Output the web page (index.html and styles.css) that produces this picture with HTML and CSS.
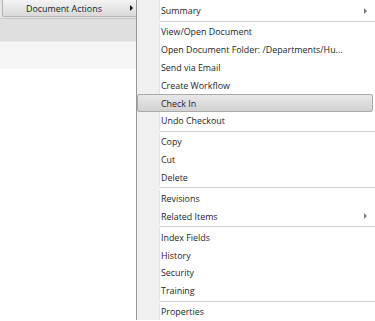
FILE: index.html
```html
<!DOCTYPE html>
<html lang="en">
<head>
  <meta charset="UTF-8">
  <title>Document Actions</title>
  <link rel="stylesheet" href="styles.css">
</head>
<body>
  <div class="page">
    <div class="toolbar">
      <div class="action-btn">
        <span>Document Actions</span>
        <span class="arrow dark"></span>
      </div>
    </div>
    <div class="band"></div>
    <div class="band-light"></div>
  </div>

  <ul class="menu">
    <li class="item">Summary <span class="arrow"></span></li>
    <li class="sep"></li>
    <li class="item">View/Open Document</li>
    <li class="item">Open Document Folder: /Departments/Hu...</li>
    <li class="item">Send via Email</li>
    <li class="item">Create Workflow</li>
    <li class="item active">Check In</li>
    <li class="item">Undo Checkout</li>
    <li class="sep"></li>
    <li class="item">Copy</li>
    <li class="item">Cut</li>
    <li class="item">Delete</li>
    <li class="sep"></li>
    <li class="item">Revisions</li>
    <li class="item">Related Items <span class="arrow"></span></li>
    <li class="sep"></li>
    <li class="item">Index Fields</li>
    <li class="item">History</li>
    <li class="item">Security</li>
    <li class="item">Training</li>
    <li class="sep"></li>
    <li class="item">Properties</li>
  </ul>
</body>
</html>
```

FILE: styles.css
```css
body {
  margin: 0;
  width: 375px;
  height: 321px;
  overflow: hidden;
  background: #fff;
  font-family: "Open Sans", "Segoe UI", sans-serif;
  font-size: 8.9px;
  color: #1e1e1e;
  position: relative;
}
.page {
  width: 140px;
}
.toolbar {
  height: 18px;
  background: #e6e6e6;
  padding-left: 2px;
}
.action-btn {
  height: 16px;
  border: 1px solid #b4b4b4;
  border-top: none;
  border-radius: 0 0 2px 2px;
  background: linear-gradient(#f4f4f4, #d9d9d9);
  display: flex;
  align-items: center;
  justify-content: space-between;
  padding: 0 6px 0 23px;
  color: #1a1a2a;
}
.band {
  height: 22px;
  background: #dfdfdf;
  border-top: 1px solid #c8c8c8;
  border-bottom: 1px solid #eaeaea;
}
.band-light {
  height: 27px;
  background: #f5f5f5;
}
.arrow {
  width: 0;
  height: 0;
  border-top: 3px solid transparent;
  border-bottom: 3px solid transparent;
  border-left: 3px solid #7a7a7a;
}
.arrow.dark {
  border-left-color: #111;
}
.menu {
  position: absolute;
  left: 136px;
  top: 0;
  width: 240px;
  margin: 0;
  padding: 2px 0 0;
  list-style: none;
  border-left: 1px solid #979797;
  background: linear-gradient(90deg, #f0f0f0 22px, #e2e3e3 22px, #e2e3e3 23px, #fff 23px);
}
.item {
  height: 17.8px;
  display: flex;
  align-items: center;
  justify-content: space-between;
  padding: 0 10px 0 24px;
  white-space: nowrap;
}
.item.active {
  margin-right: 4px;
  border: 1px solid #aaa;
  border-radius: 2px;
  height: 15.8px;
  background: linear-gradient(#e8e8e8, #d2d2d2);
  padding-left: 23px;
}
.sep {
  height: 3.2px;
  margin-left: 22px;
  background: linear-gradient(#fff 1px, #d4d4d4 1px, #d4d4d4 2px, #fff 2px);
}
```
